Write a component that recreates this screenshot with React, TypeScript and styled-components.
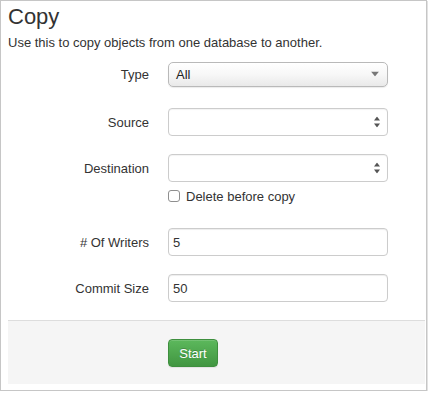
import React from "react";
import styled, { createGlobalStyle } from "styled-components";

const Global = createGlobalStyle`
  html, body { margin: 0; padding: 0; background: #ffffff; }
  body { font-family: "Liberation Sans", Arial, Helvetica, sans-serif; color: #333333; }
  * { box-sizing: border-box; }
`;

const Panel = styled.div`
  width: 427px;
  height: 391px;
  border: 1px solid #c6c6c6;
  box-shadow: 1px 1px 0 #e2e2e2;
  background: #ffffff;
  padding: 0 2px 5px 7px;
  display: flex;
  flex-direction: column;
`;

const Title = styled.h1`
  margin: 2px 0 0;
  font-size: 22px;
  font-weight: 400;
  line-height: 28px;
  color: #333333;
`;

const Intro = styled.p`
  margin: 3px 0 0;
  font-size: 13px;
  line-height: 18px;
  color: #333333;
`;

const Row = styled.div<{ $top: number; $h?: number }>`
  margin-top: ${(p) => p.$top}px;
  height: ${(p) => p.$h ?? 28}px;
  display: grid;
  grid-template-columns: 141px 220px;
  column-gap: 19px;
  align-items: center;
`;

const Label = styled.label`
  text-align: right;
  font-size: 13px;
  color: #333333;
`;

const Field = styled.div`
  position: relative;
  height: 100%;
  display: flex;
  align-items: center;
`;

const NativeSelect = styled.div`
  width: 100%;
  height: 25px;
  border: 1px solid #b9b9b9;
  border-radius: 5px;
  background: linear-gradient(#ffffff 0%, #f7f7f7 50%, #e9e9e9 100%);
  box-shadow: 0 1px 1px rgba(0, 0, 0, 0.08);
  font-size: 13px;
  color: #222222;
  display: flex;
  align-items: center;
  padding-left: 7px;
`;

const BoxSelect = styled.div`
  width: 100%;
  height: 28px;
  border: 1px solid #cccccc;
  border-radius: 4px;
  background: #ffffff;
  box-shadow: inset 0 1px 1px rgba(0, 0, 0, 0.05);
`;

const Input = styled.input`
  width: 100%;
  height: 28px;
  border: 1px solid #cccccc;
  border-radius: 4px;
  background: #ffffff;
  box-shadow: inset 0 1px 1px rgba(0, 0, 0, 0.075);
  font-family: "Liberation Sans", Arial, Helvetica, sans-serif;
  font-size: 13px;
  color: #333333;
  padding: 0 0 0 4px;
  outline: none;
`;

const Arrow = styled.svg`
  position: absolute;
  right: 8px;
  top: 50%;
  transform: translateY(-50%);
`;

const CheckLine = styled.label`
  grid-column: 2;
  display: flex;
  align-items: center;
  gap: 6px;
  font-size: 13px;
  color: #333333;
`;

const Box = styled.span`
  width: 12px;
  height: 12px;
  border: 1px solid #8f8f8f;
  border-radius: 3px;
  background: #ffffff;
`;

const Footer = styled.div`
  margin-top: 18px;
  margin-right: -1px;
  border-top: 1px solid #dddddd;
  background: #f5f5f5;
  padding: 18px 0 17px 160px;
`;

const StartButton = styled.button`
  width: 50px;
  height: 28px;
  border: 1px solid #3e8f3e;
  border-radius: 4px;
  background: linear-gradient(#5cb85c 0%, #419641 100%);
  box-shadow: inset 0 1px 0 rgba(255, 255, 255, 0.15), 0 1px 1px rgba(0, 0, 0, 0.075);
  color: #ffffff;
  font-family: "Liberation Sans", Arial, Helvetica, sans-serif;
  font-size: 13px;
  text-shadow: 0 -1px 0 rgba(0, 0, 0, 0.2);
  padding: 0;
`;

const DownTriangle = () => (
  <Arrow width="8" height="5" viewBox="0 0 8 5" style={{ right: 9 }}>
    <path d="M0 0 L8 0 L4 5 Z" fill="#777777" />
  </Arrow>
);

const UpDown = () => (
  <Arrow width="6" height="11" viewBox="0 0 6 11">
    <path d="M0 4 L3 0 L6 4 Z" fill="#555555" />
    <path d="M0 7 L6 7 L3 11 Z" fill="#555555" />
  </Arrow>
);

export default function App() {
  return (
    <>
      <Global />
      <Panel>
        <Title>Copy</Title>
        <Intro>Use this to copy objects from one database to another.</Intro>

        <Row $top={8}>
          <Label>Type</Label>
          <Field>
            <NativeSelect>All</NativeSelect>
            <DownTriangle />
          </Field>
        </Row>

        <Row $top={20}>
          <Label>Source</Label>
          <Field>
            <BoxSelect />
            <UpDown />
          </Field>
        </Row>

        <Row $top={18}>
          <Label>Destination</Label>
          <Field>
            <BoxSelect />
            <UpDown />
          </Field>
        </Row>

        <Row $top={5} $h={18}>
          <CheckLine>
            <Box />
            Delete before copy
          </CheckLine>
        </Row>

        <Row $top={23}>
          <Label># Of Writers</Label>
          <Field>
            <Input defaultValue="5" />
          </Field>
        </Row>

        <Row $top={18}>
          <Label>Commit Size</Label>
          <Field>
            <Input defaultValue="50" />
          </Field>
        </Row>

        <Footer>
          <StartButton>Start</StartButton>
        </Footer>
      </Panel>
    </>
  );
}
